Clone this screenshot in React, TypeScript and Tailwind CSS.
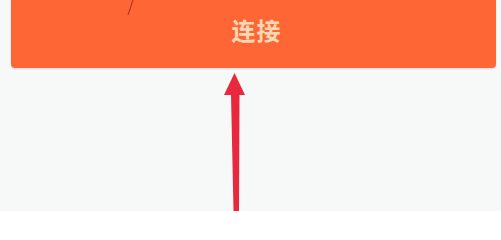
export default function App() {
  return (
    <div className="relative h-[211px] w-full overflow-hidden bg-[#f7f8f8] font-['Noto_Sans_CJK_SC',sans-serif]">
      <div className="ml-[11px] mr-[5px] flex h-[68px] items-center justify-center rounded-b-[4px] bg-[#ff6636] pb-[8px] pl-[6px] shadow-[0_1px_2px_rgba(0,0,0,0.12)]">
        <span className="text-[24px] font-bold tracking-[1px] text-[#fad8b4]">连接</span>
      </div>
      <svg className="pointer-events-none absolute inset-0" width="501" height="211" viewBox="0 0 501 211">
        <path d="M133 0 C131 5 130 10 128 15" stroke="#b83a1c" strokeWidth="1.2" fill="none" />
        <polygon points="234.5,73 224,95 245,95" fill="#e8283c" />
        <polygon points="231,94 239.5,94 239,211 233.5,211" fill="#e8283c" />
      </svg>
    </div>
  );
}
